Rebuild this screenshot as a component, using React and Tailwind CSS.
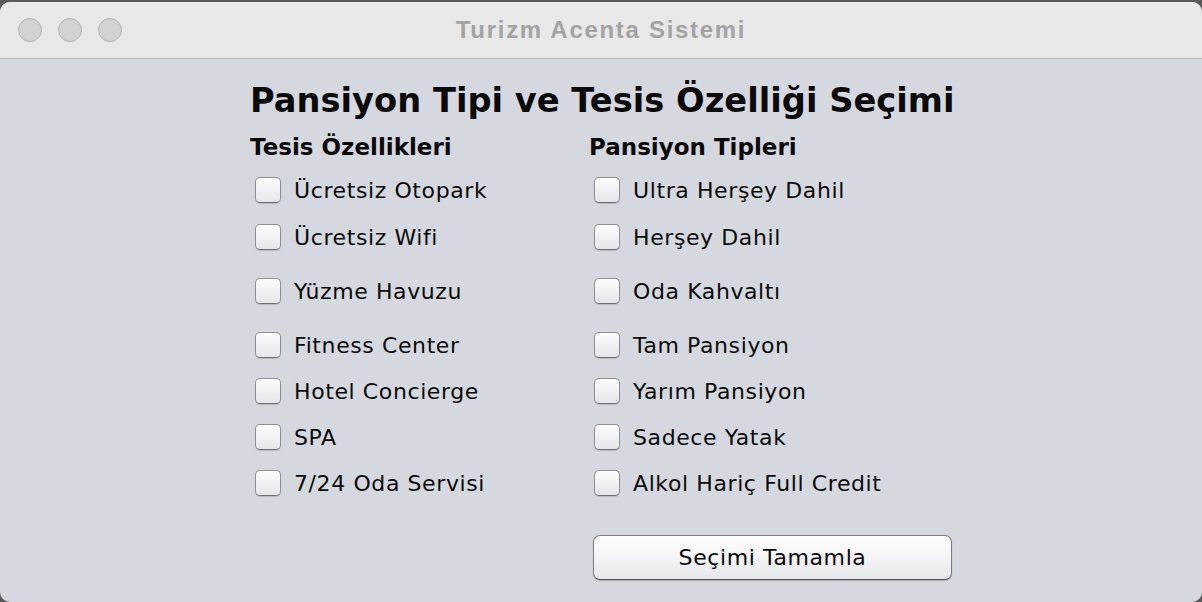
import React from 'react';

const features = [
  'Ücretsiz Otopark',
  'Ücretsiz Wifi',
  'Yüzme Havuzu',
  'Fitness Center',
  'Hotel Concierge',
  'SPA',
  '7/24 Oda Servisi',
];

const boards = [
  'Ultra Herşey Dahil',
  'Herşey Dahil',
  'Oda Kahvaltı',
  'Tam Pansiyon',
  'Yarım Pansiyon',
  'Sadece Yatak',
  'Alkol Hariç Full Credit',
];

const rowHeights = ['h-[50px]', 'h-[44px]', 'h-[64px]', 'h-[44px]', 'h-[48px]', 'h-[44px]', 'h-[48px]'];

function Check({ label }) {
  return (
    <label className="flex items-center gap-[13px] pl-[5px] cursor-default">
      <span className="w-[26px] h-[26px] rounded-[5px] border border-[#8f9096] border-b-[#6d6e73] bg-gradient-to-b from-[#fdfdfe] to-[#e4e6eb] shadow-[0_1px_1px_rgba(0,0,0,0.15)]" />
      <span className="text-[22px] tracking-[0.6px] text-[#0a0a0a]">{label}</span>
    </label>
  );
}

export default function App() {
  return (
    <div
      className="w-[1202px] h-[602px] bg-[#5a5a5a] overflow-hidden"
      style={{ fontFamily: '"DejaVu Sans", sans-serif' }}>
      <div className="mt-[2px] h-[600px] rounded-t-[10px] rounded-b-[10px] bg-[#d6d8df] flex flex-col overflow-hidden">
        <div className="h-[57px] bg-[#e8e8e8] border-b border-[#b9b9b9] relative flex items-center justify-center">
          <div className="absolute left-[18px] top-[16px] flex gap-[16px]">
            <span className="w-[24px] h-[24px] rounded-full bg-[#d2d2d2] border border-[#b3b3b3]" />
            <span className="w-[24px] h-[24px] rounded-full bg-[#d2d2d2] border border-[#b3b3b3]" />
            <span className="w-[24px] h-[24px] rounded-full bg-[#d2d2d2] border border-[#b3b3b3]" />
          </div>
          <span
            className="text-[24px] tracking-[1.7px] font-bold text-[#a3a3a3]"
            style={{ fontFamily: '"Liberation Sans", Arial, sans-serif' }}>
            Turizm Acenta Sistemi
          </span>
        </div>

        <div className="pl-[250px] pt-[23px]">
          <h1 className="h-[38px] flex items-center text-[33.7px] font-bold text-[#0a0a0a] leading-none">
            Pansiyon Tipi ve Tesis Özelliği Seçimi
          </h1>

          <div className="grid grid-cols-[339px_400px] mt-[10px]">
            <div className="h-[35px] flex items-center text-[23px] font-bold text-[#0a0a0a]">
              Tesis Özellikleri
            </div>
            <div className="h-[35px] flex items-center text-[23px] font-bold text-[#0a0a0a]">
              Pansiyon Tipleri
            </div>
            {features.map((f, i) => (
              <React.Fragment key={f}>
                <div className={`${rowHeights[i]} flex items-center`}>
                  <Check label={f} />
                </div>
                <div className={`${rowHeights[i]} flex items-center`}>
                  <Check label={boards[i]} />
                </div>
              </React.Fragment>
            ))}
          </div>

          <div className="pl-[343px] mt-[28px]">
            <button className="w-[359px] h-[45px] rounded-[7px] border border-[#7c7d82] border-b-[#4e4f53] bg-gradient-to-b from-[#fefefe] via-[#f4f4f6] to-[#e6e7ec] shadow-[0_1px_1px_rgba(0,0,0,0.2)] text-[22px] tracking-[0.6px] text-[#0a0a0a]">
              Seçimi Tamamla
            </button>
          </div>
        </div>
      </div>
    </div>
  );
}
